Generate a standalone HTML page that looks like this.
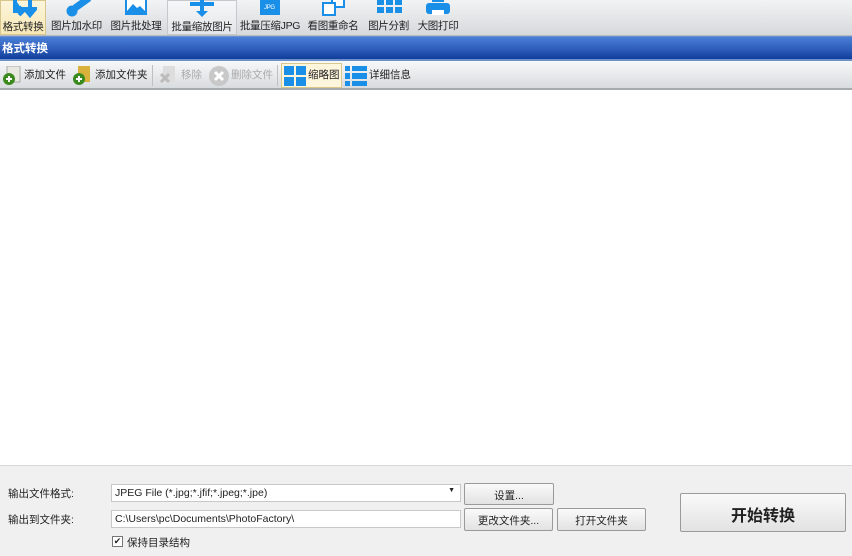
<!DOCTYPE html>
<html><head><meta charset="utf-8"><style>
*{margin:0;padding:0;box-sizing:border-box}
body{width:852px;height:556px;overflow:hidden;background:#fff;font-family:"Liberation Sans","Noto Sans CJK SC",sans-serif;font-size:11px;color:#222;position:relative}
.abs{position:absolute}
#top{left:0;top:0;width:852px;height:36px;background:linear-gradient(#f2f3f4,#d6d9dc);border-bottom:1px solid #b8bcc2}
.tab{position:absolute;top:0;height:35px;text-align:center;font-size:10.5px;white-space:nowrap;letter-spacing:-0.3px}
.tab span{position:absolute;left:0;right:0;top:18px}
.ic{position:absolute;left:50%;transform:translateX(-50%);top:-2px}
#title{left:0;top:36px;width:852px;height:25px;background:linear-gradient(#4a7fd6,#2a5bb8 60%,#0f3d99);border-top:1px solid #6b8fd0;border-bottom:2px solid #6d8fca;color:#fff;font-weight:bold;font-size:11.5px;padding:3px 0 0 2px}
#tb{left:0;top:61px;width:852px;height:29px;background:linear-gradient(#f7f8f8,#d9dcdf);border-bottom:2px solid #a8abae}
.ti{position:absolute;top:6px;font-size:10.5px;white-space:nowrap}
#bot{left:0;top:465px;width:852px;height:91px;background:#f0f0f0;border-top:1px solid #d8d8d8}
.lbl{position:absolute;font-size:10.5px}
.inp{position:absolute;background:#fff;border:1px solid #c8c8c8;height:18px;font-size:10.5px;padding:2px 3px}
.btn{position:absolute;border:1px solid #9a9a9a;background:linear-gradient(#fafafa,#e2e2e2);border-radius:2px;text-align:center;font-size:10.5px;padding-top:4px}
</style></head><body>
<div id="top" class="abs">
 <div class="tab" style="left:0;width:46px;background:linear-gradient(#fdf6dc,#f6e7b5);border:1px solid #d8c68a"><svg class="ic" width="28" height="19"><path d="M6 0v12h8M10 8l4 4-4 4M21 0v14M16 10l5 6 5-6z" stroke="#1a8fe8" stroke-width="4" fill="#1a8fe8"/></svg><span>格式转换</span></div>
 <div class="tab" style="left:48px;width:57px"><svg class="ic" width="28" height="19"><path d="M26 0L12 10" stroke="#1a8fe8" stroke-width="7"/><circle cx="9" cy="13" r="5.5" fill="#1a8fe8"/></svg><span>图片加水印</span></div>
 <div class="tab" style="left:107px;width:58px"><svg class="ic" width="28" height="19"><rect x="3" y="-2" width="22" height="19" fill="#1a8fe8"/><rect x="5" y="0" width="18" height="13" fill="#fff"/><path d="M5 13l6-7 4 4 3-2 5 5z" fill="#1a8fe8"/></svg><span>图片批处理</span></div>
 <div class="tab" style="left:167px;width:70px;border:1px solid #c5c8cc;background:linear-gradient(#f6f7f8,#e3e5e8)"><svg class="ic" width="30" height="19"><path d="M15 0v14M3 5h24" stroke="#1a8fe8" stroke-width="4"/><path d="M9 12l6 6 6-6z" fill="#1a8fe8"/></svg><span>批量缩放图片</span></div>
 <div class="tab" style="left:239px;width:62px"><svg class="ic" width="28" height="19"><rect x="4" y="0" width="20" height="17" fill="#1a8fe8"/><text x="8" y="11" font-size="6" fill="#fff">JPG</text></svg><span>批量压缩JPG</span></div>
 <div class="tab" style="left:305px;width:56px"><svg class="ic" width="28" height="19"><rect x="13" y="0" width="12" height="9" fill="#fff" stroke="#1a8fe8" stroke-width="2"/><rect x="4" y="5" width="12" height="12" fill="#fff" stroke="#1a8fe8" stroke-width="2"/></svg><span>看图重命名</span></div>
 <div class="tab" style="left:366px;width:45px"><svg class="ic" width="28" height="19"><g fill="#1a8fe8"><rect x="2" y="1" width="7" height="6"/><rect x="11" y="1" width="7" height="6"/><rect x="20" y="1" width="7" height="6"/><rect x="2" y="9" width="7" height="6"/><rect x="11" y="9" width="7" height="6"/><rect x="20" y="9" width="7" height="6"/></g></svg><span>图片分割</span></div>
 <div class="tab" style="left:415px;width:46px"><svg class="ic" width="28" height="19"><rect x="8" y="0" width="12" height="4" fill="#1a8fe8"/><rect x="2" y="5" width="24" height="11" rx="3" fill="#1a8fe8"/><rect x="8" y="12" width="12" height="5" fill="#fff"/></svg><span>大图打印</span></div>
</div>
<div id="title" class="abs">格式转换</div>
<div id="tb" class="abs">
 <svg class="abs" style="left:2px;top:5px" width="20" height="20"><rect x="5" y="0" width="13" height="16" fill="#e8e8e0" stroke="#aaa"/><circle cx="7" cy="13" r="6" fill="#3a8a1e"/><path d="M4 13h6M7 10v6" stroke="#fff" stroke-width="2"/></svg>
 <div class="ti" style="left:24px">添加文件</div>
 <svg class="abs" style="left:72px;top:5px" width="20" height="20"><rect x="6" y="0" width="12" height="16" fill="#d8b23a"/><circle cx="7" cy="13" r="6" fill="#3a8a1e"/><path d="M4 13h6M7 10v6" stroke="#fff" stroke-width="2"/></svg>
 <div class="ti" style="left:95px">添加文件夹</div>
 <div class="abs" style="left:152px;top:4px;width:1px;height:21px;background:#c0c0c0"></div>
 <svg class="abs" style="left:158px;top:5px" width="20" height="20"><rect x="5" y="0" width="12" height="16" fill="#ddd"/><path d="M3 8l8 8M11 8l-8 8" stroke="#bbb" stroke-width="3"/></svg>
 <div class="ti" style="left:181px;color:#aaa">移除</div>
 <svg class="abs" style="left:208px;top:4px" width="22" height="22"><circle cx="11" cy="11" r="10" fill="#c8c8c8"/><path d="M7 7l8 8M15 7l-8 8" stroke="#fff" stroke-width="3"/></svg>
 <div class="ti" style="left:231px;color:#aaa">删除文件</div>
 <div class="abs" style="left:277px;top:4px;width:1px;height:21px;background:#c0c0c0"></div>
 <div class="abs" style="left:281px;top:2px;width:61px;height:25px;background:#fdf6dc;border:1px solid #d8c68a"></div>
 <svg class="abs" style="left:284px;top:5px" width="22" height="20"><g fill="#1a8fe8"><rect x="0" y="0" width="10" height="9"/><rect x="12" y="0" width="10" height="9"/><rect x="0" y="11" width="10" height="9"/><rect x="12" y="11" width="10" height="9"/></g></svg>
 <div class="ti" style="left:308px">缩略图</div>
 <svg class="abs" style="left:345px;top:5px" width="22" height="20"><g fill="#1a8fe8"><rect x="0" y="0" width="5" height="5"/><rect x="7" y="0" width="15" height="5"/><rect x="0" y="7" width="5" height="6"/><rect x="7" y="7" width="15" height="6"/><rect x="0" y="15" width="5" height="5"/><rect x="7" y="15" width="15" height="5"/></g></svg>
 <div class="ti" style="left:369px">详细信息</div>
</div>
<div id="bot" class="abs">
 <div class="lbl" style="left:8px;top:20px">输出文件格式:</div>
 <div class="inp" style="left:111px;top:18px;width:350px">JPEG File (*.jpg;*.jfif;*.jpeg;*.jpe)<span style="position:absolute;right:5px;top:2px;font-size:7px">▼</span></div>
 <div class="btn" style="left:464px;top:17px;width:90px;height:22px">设置...</div>
 <div class="lbl" style="left:8px;top:46px">输出到文件夹:</div>
 <div class="inp" style="left:111px;top:44px;width:350px">C:\Users\pc\Documents\PhotoFactory\</div>
 <div class="btn" style="left:464px;top:42px;width:89px;height:23px">更改文件夹...</div>
 <div class="btn" style="left:557px;top:42px;width:89px;height:23px">打开文件夹</div>
 <div class="abs" style="left:112px;top:70px;width:11px;height:11px;border:1px solid #777;background:#fff;font-size:9px;line-height:9px;text-align:center">✔</div>
 <div class="lbl" style="left:127px;top:69px">保持目录结构</div>
 <div class="btn" style="left:680px;top:27px;width:166px;height:39px;font-size:16px;font-weight:bold;padding-top:8px">开始转换</div>
</div>
</body></html>
